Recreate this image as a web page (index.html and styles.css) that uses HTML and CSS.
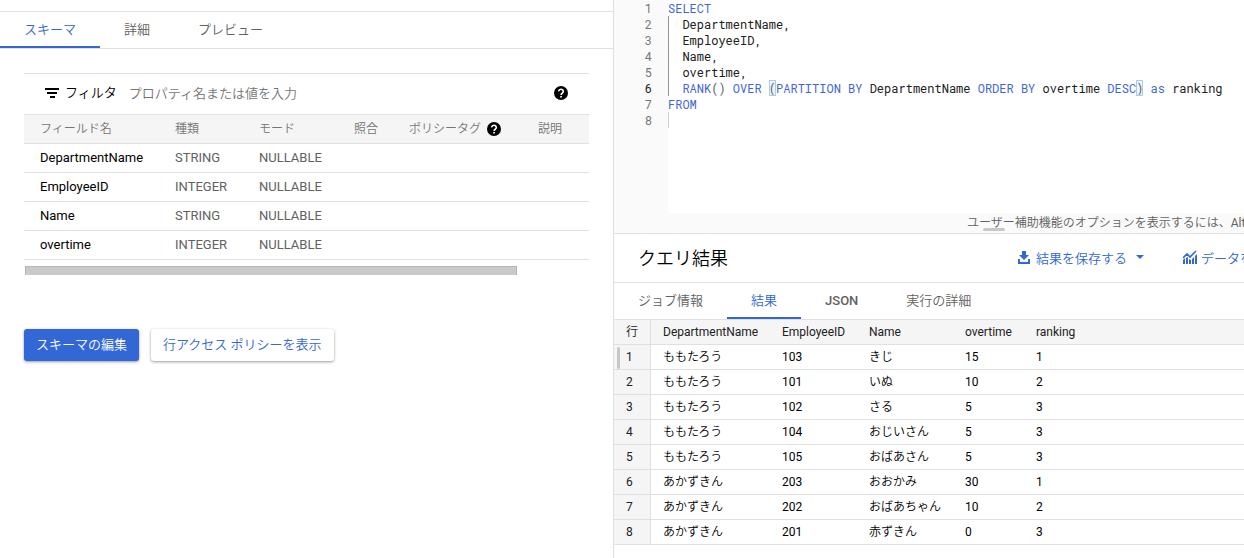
FILE: index.html
```html
<!DOCTYPE html>
<html lang="ja">

<head>
    <meta charset="UTF-8">
    <meta name="viewport" content="width=device-width, initial-scale=1.0">
    <title>クエリ結果</title>
    <link rel="stylesheet" href="styles.css">
</head>

<body>
    <svg class="defs" width="0" height="0">
        <symbol id="help" viewBox="0 0 14 14">
            <circle cx="7" cy="7" r="7" />
            <path d="M4.7 5.4a2.3 2.1 0 1 1 3.7 1.6C7.5 7.6 7.1 7.9 7.1 9" fill="none" stroke="#fff" stroke-width="1.6" />
            <path d="M6.2 10h1.7v1.6H6.2z" fill="#fff" />
        </symbol>
    </svg>

    <div class="container">
        <section class="schema">
            <nav class="tabs">
                <a class="tab active" href="#schema">スキーマ</a>
                <a class="tab" href="#details">詳細</a>
                <a class="tab" href="#preview">プレビュー</a>
            </nav>

            <div class="fields">
                <div class="filter">
                    <svg class="filter-icon" width="14" height="10" viewBox="0 0 14 10">
                        <path d="M0 0h14v2H0zM2 4h10v2H2zM5 8h5v2H5z" />
                    </svg>
                    <label for="filter">フィルタ</label>
                    <input id="filter" type="text" placeholder="プロパティ名または値を入力">
                    <svg class="help" width="14" height="14"><use href="#help" /></svg>
                </div>
                <table class="field-table">
                    <colgroup>
                        <col class="f-name">
                        <col class="f-type">
                        <col class="f-mode">
                        <col class="f-collation">
                        <col class="f-policy">
                        <col>
                    </colgroup>
                    <thead>
                        <tr>
                            <th>フィールド名</th>
                            <th>種類</th>
                            <th>モード</th>
                            <th>照合</th>
                            <th><div class="policy">ポリシータグ <svg class="help" width="14" height="14"><use href="#help" /></svg></div></th>
                            <th>説明</th>
                        </tr>
                    </thead>
                    <tbody>
                        <tr><td>DepartmentName</td><td>STRING</td><td>NULLABLE</td><td></td><td></td><td></td></tr>
                        <tr><td>EmployeeID</td><td>INTEGER</td><td>NULLABLE</td><td></td><td></td><td></td></tr>
                        <tr><td>Name</td><td>STRING</td><td>NULLABLE</td><td></td><td></td><td></td></tr>
                        <tr><td>overtime</td><td>INTEGER</td><td>NULLABLE</td><td></td><td></td><td></td></tr>
                    </tbody>
                </table>
                <div class="scrollbar"></div>
            </div>

            <div class="buttons">
                <button class="btn primary" type="button">スキーマの編集</button>
                <button class="btn" type="button">行アクセス ポリシーを表示</button>
            </div>
        </section>

        <section class="query">
            <div class="editor">
                <ol class="gutter">
                    <li>1</li>
                    <li>2</li>
                    <li>3</li>
                    <li>4</li>
                    <li>5</li>
                    <li class="current">6</li>
                    <li>7</li>
                    <li>8</li>
                </ol>
                <div class="code">
                    <div><b>SELECT</b></div>
                    <div class="guide">  DepartmentName,</div>
                    <div class="guide">  EmployeeID,</div>
                    <div class="guide">  Name,</div>
                    <div class="guide">  overtime,</div>
                    <div class="guide">  <b>RANK</b><i>()</i> <b>OVER</b> <i class="match">(</i><b>PARTITION</b> <b>BY</b> DepartmentName <b>ORDER</b> <b>BY</b> overtime <b>DESC</b><i class="match">)</i> <b>as</b> ranking</div>
                    <div><b>FROM</b></div>
                    <div class="cursor"></div>
                </div>
            </div>
            <div class="hint">
                <span>ユーザー補助機能のオプションを表示するには、Alt+F1 を押します。</span>
                <div class="grip"></div>
            </div>

            <header class="result-header">
                <h2>クエリ結果</h2>
                <button class="action" type="button">
                    <svg width="12" height="13" viewBox="0 0 12 13">
                        <path d="M4 0h4v4h3L6 9 1 4h3zM0 8h2v3h8V8h2v5H0z" />
                    </svg>
                    結果を保存する
                    <svg class="arrow" width="8" height="4" viewBox="0 0 8 4">
                        <path d="M0 0h8L4 4z" />
                    </svg>
                </button>
                <button class="action explore" type="button">
                    <svg width="14" height="14" viewBox="0 0 14 14">
                        <path d="M0 10l2-2v6H0zM3 8l2-1v7H3zM6 9l2 1v4H6zM9 9l2-2v7H9zM12 6l2-2v10h-2z" />
                        <path d="M0 8l4-4 3 3 6-6" fill="none" stroke="#3367d6" stroke-width="1.6" />
                    </svg>
                    データを探索
                </button>
            </header>

            <nav class="tabs">
                <a class="tab" href="#job">ジョブ情報</a>
                <a class="tab active" href="#result">結果</a>
                <a class="tab" href="#json">JSON</a>
                <a class="tab" href="#execution">実行の詳細</a>
            </nav>

            <div class="result">
                <table class="result-table">
                    <colgroup>
                        <col class="r-row">
                        <col class="r-dept">
                        <col class="r-id">
                        <col class="r-name">
                        <col class="r-overtime">
                        <col>
                    </colgroup>
                    <thead>
                        <tr><th>行</th><th>DepartmentName</th><th>EmployeeID</th><th>Name</th><th>overtime</th><th>ranking</th></tr>
                    </thead>
                    <tbody>
                        <tr><td>1</td><td>ももたろう</td><td>103</td><td>きじ</td><td>15</td><td>1</td></tr>
                        <tr><td>2</td><td>ももたろう</td><td>101</td><td>いぬ</td><td>10</td><td>2</td></tr>
                        <tr><td>3</td><td>ももたろう</td><td>102</td><td>さる</td><td>5</td><td>3</td></tr>
                        <tr><td>4</td><td>ももたろう</td><td>104</td><td>おじいさん</td><td>5</td><td>3</td></tr>
                        <tr><td>5</td><td>ももたろう</td><td>105</td><td>おばあさん</td><td>5</td><td>3</td></tr>
                        <tr><td>6</td><td>あかずきん</td><td>203</td><td>おおかみ</td><td>30</td><td>1</td></tr>
                        <tr><td>7</td><td>あかずきん</td><td>202</td><td>おばあちゃん</td><td>10</td><td>2</td></tr>
                        <tr><td>8</td><td>あかずきん</td><td>201</td><td>赤ずきん</td><td>0</td><td>3</td></tr>
                    </tbody>
                </table>
                <div class="grip-v"></div>
            </div>
        </section>
    </div>
</body>

</html>
```

FILE: styles.css
```css
* {
    box-sizing: border-box;
}

body {
    margin: 0;
    overflow: hidden;
    background-color: #fff;
    color: #212121;
    font-family: Roboto, "Noto Sans CJK JP DemiLight", "Noto Sans CJK JP", sans-serif;
    font-size: 13px;
}

.defs {
    display: block;
}

.container {
    display: grid;
    grid-template-columns: minmax(0, 614fr) minmax(0, 630fr);
    min-height: 100vh;
}

/* tabs */
.tabs {
    display: flex;
    border-bottom: 1px solid #e0e0e0;
}

.tab {
    height: 36px;
    padding: 0 24px;
    border-bottom: 2px solid transparent;
    color: #616161;
    line-height: 36px;
    font-weight: 400;
    text-decoration: none;
}

.tab.active {
    border-color: #3367d6;
    color: #3367d6;
}

.tab[href="#json"] {
    font-weight: 500;
}

/* schema */
.schema {
    padding-top: 11px;
    border-right: 1px solid #e0e0e0;
}

.schema .tabs {
    border-top: 1px solid #e0e0e0;
}

.fields {
    margin: 24px 24px 0;
    border-top: 1px solid #e0e0e0;
}

.filter {
    display: flex;
    align-items: center;
    height: 40px;
    padding: 0 21px 2px;
    color: #000;
    line-height: 16px;
}

.filter label {
    margin: 0 12px 0 6px;
}

.filter input {
    flex: 1;
    min-width: 0;
    height: 20px;
    padding: 0;
    border: 0;
    outline: 0;
    font: inherit;
}

.filter input::placeholder {
    color: #757575;
}

.help {
    fill: #000;
}

table {
    width: 100%;
    border-collapse: separate;
    border-spacing: 0;
    table-layout: fixed;
}

th,
td {
    text-align: left;
    font-weight: 400;
    white-space: nowrap;
    border-bottom: 1px solid #e0e0e0;
}

.field-table th,
.field-table td {
    height: 29px;
    padding: 0 0 0 16px;
    color: #616161;
    line-height: 16px;
}

.field-table th {
    background-color: #f5f5f5;
    border-top: 1px solid #e0e0e0;
    height: 30px;
    color: #757575;
    font-size: 12px;
}

.field-table td:first-child {
    color: #000;
}

.policy {
    display: flex;
    align-items: center;
    gap: 6px;
}

.f-name {
    width: 135px;
}

.f-type {
    width: 84px;
}

.f-mode {
    width: 95px;
}

.f-collation {
    width: 55px;
}

.f-policy {
    width: 129px;
}

.scrollbar {
    width: 87%;
    height: 9px;
    margin: 6px 0 0 1px;
    background-color: #cacaca;
    border: 1px solid #b5b5b5;
    border-bottom: 0;
}

.buttons {
    display: flex;
    gap: 12px;
    margin: 54px 24px 0;
}

.btn {
    height: 32px;
    padding: 0 12px 3px;
    border: 0;
    border-radius: 3px;
    background-color: #fff;
    box-shadow: 0 1px 3px rgba(0, 0, 0, 0.4);
    color: #3367d6;
    font: inherit;
}

.btn.primary {
    background-color: #3367d6;
    color: #fff;
}

/* editor */
.editor {
    display: flex;
    height: 213px;
    font-family: "Roboto Mono", "DejaVu Sans Mono", monospace;
    font-size: 12px;
    line-height: 16px;
}

.gutter {
    width: 54px;
    margin: 0;
    padding: 0 16px 0 0;
    background-color: #fafafa;
    color: #757575;
    list-style: none;
    text-align: right;
}

.gutter .current {
    color: #212121;
}

.code {
    flex: 1;
    min-width: 0;
}

.code div {
    height: 16px;
    white-space: pre;
}

.code b {
    color: #3f66d6;
    font-weight: 400;
}

.code i {
    color: #616161;
    font-style: normal;
}

.guide {
    box-shadow: inset 1px 0 #939393;
}

.cursor {
    box-shadow: inset 1px 0 #d0d0d0;
}

.code .match {
    background-color: #eef6fb;
    outline: 1px solid #a9cdf0;
    outline-offset: -1px;
}

.hint {
    position: relative;
    height: 21px;
    padding-left: 353px;
    overflow: hidden;
    background-color: #fafafa;
    border-bottom: 1px solid #e0e0e0;
    color: #616161;
    font-size: 12px;
    line-height: 20px;
    white-space: nowrap;
}

.grip,
.grip-v {
    position: absolute;
    border-radius: 2px;
    background-color: #c8c8c8;
}

.grip {
    left: 369px;
    bottom: 2px;
    width: 22px;
    height: 3px;
}

.grip-v {
    left: 3px;
    top: 27px;
    width: 3px;
    height: 22px;
}

/* results */
.result-header {
    display: flex;
    align-items: center;
    height: 49px;
    padding: 0 0 2px 24px;
    overflow: hidden;
    border-bottom: 1px solid #e0e0e0;
}

.result-header h2 {
    flex: none;
    width: 380px;
    margin: 0;
    color: #000;
    font-size: 18px;
    font-weight: 400;
}

.action {
    display: flex;
    flex: none;
    align-items: center;
    gap: 6px;
    padding: 0;
    border: 0;
    background: none;
    color: #3367d6;
    font: inherit;
    white-space: nowrap;
}

.action svg {
    fill: #3367d6;
}

.action .arrow {
    margin-left: 3px;
}

.explore {
    gap: 4px;
    margin-left: 39px;
}

.result {
    position: relative;
}

.result-table {
    font-size: 12px;
}

.result-table th,
.result-table td {
    height: 25px;
    padding: 0 0 0 12px;
    line-height: 24px;
}

.result-table td {
    color: #000;
}

.result-table th,
.result-table td:first-child {
    background-color: #f5f5f5;
    color: #212121;
}

.result-table th:first-child,
.result-table td:first-child {
    border-right: 1px solid #e0e0e0;
}

.r-row {
    width: 37px;
}

.r-dept {
    width: 119px;
}

.r-id {
    width: 87px;
}

.r-name {
    width: 96px;
}

.r-overtime {
    width: 71px;
}
```
